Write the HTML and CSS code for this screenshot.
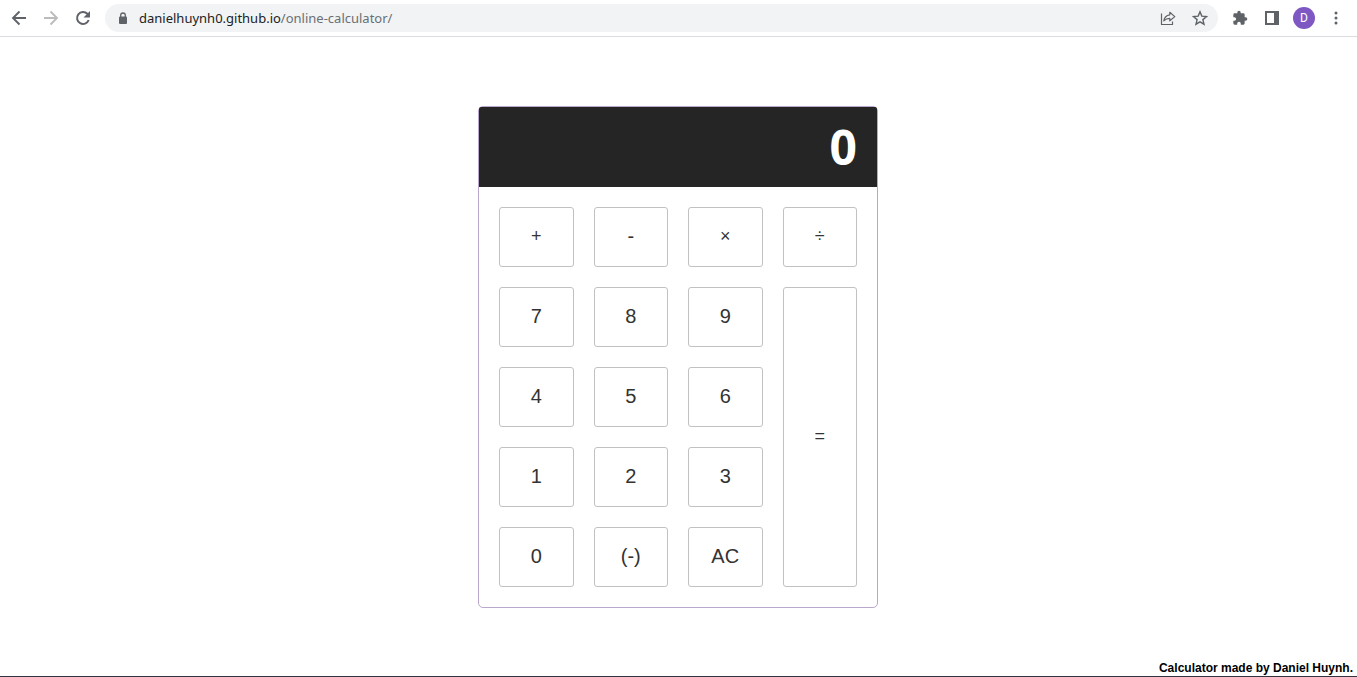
FILE: index.html
```html
<!DOCTYPE html>
<html lang="en">
<head>
<meta charset="utf-8">
<title>Online Calculator</title>
<link rel="stylesheet" href="styles.css">
</head>
<body>
<header class="toolbar">
  <nav class="nav">
    <button class="icon-button" aria-label="Back"><svg viewBox="0 0 16 16"><path d="M15 8H2.500M8.500 1.500L2 8l6.500 6.500" fill="none" stroke="currentColor" stroke-width="1.900"/></svg></button>
    <button class="icon-button faded" aria-label="Forward"><svg viewBox="0 0 16 16"><path d="M1 8h12.500M7.500 1.500L14 8l-6.500 6.500" fill="none" stroke="currentColor" stroke-width="1.900"/></svg></button>
    <button class="icon-button" aria-label="Reload"><svg viewBox="0 0 16 16"><path d="M13.700 10a6 6 0 1 1-1.300-6.200L14 5.400" fill="none" stroke="currentColor" stroke-width="2"/><path d="M15 1v6.500H8.500z" fill="currentColor"/></svg></button>
  </nav>
  <div class="address">
    <svg class="lock" viewBox="0 0 10 13" aria-hidden="true"><rect x="1" y="4.500" width="8" height="7.500" rx="1" fill="currentColor"/><path d="M2.700 5V3.300a2.300 2.300 0 0 1 4.600 0V5" fill="none" stroke="currentColor" stroke-width="1.300"/></svg>
    <a class="url" href="#"><span class="host">danielhuynh0.github.io</span>/online-calculator/</a>
    <button class="icon-button" aria-label="Share"><svg viewBox="0 0 16 16"><path d="M1.500 3.500v11h11v-3M3.800 10.800C4.300 7.500 6.300 5.200 9.800 4.800V2.300l5 4.300-5 4.200V8.300c-2.500 0-4.500.8-6 2.500z" fill="none" stroke="currentColor" stroke-width="1.200" stroke-linejoin="round"/></svg></button>
    <button class="icon-button" aria-label="Bookmark"><svg viewBox="0 0 16 16"><path d="M8 1.800l1.800 4.300 4.700.4-3.600 3.100 1.100 4.600L8 11.800l-4 2.400 1.100-4.600-3.600-3.100 4.700-.4z" fill="none" stroke="currentColor" stroke-width="1.400"/></svg></button>
  </div>
  <div class="actions">
    <button class="icon-button" aria-label="Extensions"><svg viewBox="0 0 24 24"><path d="M20.500 11H19V7a2 2 0 0 0-2-2h-4V3.500a2.500 2.500 0 0 0-5 0V5H4a2 2 0 0 0-2 2v3.800h1.500a2.700 2.700 0 0 1 0 5.400H2V20a2 2 0 0 0 2 2h3.800v-1.500a2.700 2.700 0 0 1 5.400 0V22H17a2 2 0 0 0 2-2v-4h1.500a2.500 2.500 0 0 0 0-5z" fill="currentColor"/></svg></button>
    <button class="icon-button" aria-label="Side panel"><svg viewBox="0 0 16 16"><path d="M1 1h14v14H1zM3 3v10h7V3z" fill="currentColor" fill-rule="evenodd"/></svg></button>
    <button class="avatar" aria-label="Profile">D</button>
    <button class="icon-button" aria-label="Menu"><svg viewBox="0 0 16 16" fill="currentColor"><circle cx="8" cy="3" r="1.500"/><circle cx="8" cy="8" r="1.500"/><circle cx="8" cy="13" r="1.500"/></svg></button>
  </div>
</header>
<main class="stage">
  <section class="calculator" aria-label="Calculator">
    <output class="display">0</output>
    <div class="keys">
      <button class="key operator">+</button>
      <button class="key">-</button>
      <button class="key operator">×</button>
      <button class="key operator">÷</button>
      <button class="key">7</button>
      <button class="key">8</button>
      <button class="key">9</button>
      <button class="key operator equals">=</button>
      <button class="key">4</button>
      <button class="key">5</button>
      <button class="key">6</button>
      <button class="key">1</button>
      <button class="key">2</button>
      <button class="key">3</button>
      <button class="key">0</button>
      <button class="key">(-)</button>
      <button class="key">AC</button>
    </div>
  </section>
</main>
<footer class="credit">Calculator made by Daniel Huynh.</footer>
</body>
</html>
```
FILE: styles.css
```css
* {
  box-sizing: border-box;
}

body {
  display: flex;
  flex-direction: column;
  min-height: 100vh;
  margin: 0;
  background: #fff;
  font-family: "Liberation Sans", Arial, sans-serif;
}

button {
  padding: 0;
  border: 0;
  background: none;
  font: inherit;
  cursor: pointer;
}

.toolbar {
  display: flex;
  align-items: center;
  gap: 14px;
  height: 37px;
  padding: 0 13px 0 11px;
  border-bottom: 1px solid #dadce0;
  color: #5f6368;
}

.nav,
.actions {
  display: flex;
  align-items: center;
  gap: 16px;
}

.icon-button {
  display: block;
  width: 16px;
  height: 16px;
  color: #5f6368;
}

.icon-button svg {
  display: block;
  width: 100%;
  height: 100%;
}

.faded {
  color: #babcbe;
}

.address {
  display: flex;
  flex: 1;
  align-items: center;
  gap: 16px;
  height: 28px;
  padding: 0 10px 0 13px;
  border-radius: 14px;
  background: #f1f3f4;
}

.lock {
  width: 10px;
  height: 13px;
}

.url {
  flex: 1;
  margin-left: -5px;
  color: #6b6f74;
  font: 13px/20px "Noto Sans", "Open Sans", sans-serif;
  text-decoration: none;
}

.host {
  color: #202124;
}

.avatar {
  width: 22px;
  height: 22px;
  margin: 0 -3px;
  border-radius: 50%;
  background: #7e57c2;
  color: #fff;
  font: 12px/22px Roboto, sans-serif;
}

.stage {
  display: flex;
  flex: 1;
  align-items: center;
  justify-content: center;
  padding: 17px 1px 0 0;
}

.calculator {
  width: 400px;
  max-width: 100%;
  border: 1px solid #b9a7cd;
  border-radius: 5px;
}

.display {
  display: block;
  height: 80px;
  padding: 0 20px;
  border-radius: 2px 2px 0 0;
  background: #252525;
  color: #fff;
  font: bold 48px/80px "Open Sans", "Noto Sans", sans-serif;
  text-align: right;
}

.keys {
  display: grid;
  grid-template-columns: repeat(4, 1fr);
  grid-auto-rows: 60px;
  gap: 20px;
  padding: 20px;
}

.key {
  padding-bottom: 2px;
  border: 1px solid #c1c1c1;
  border-radius: 3px;
  color: #333;
  font-size: 20px;
}

.operator {
  font-size: 18px;
}

.equals {
  grid-row: span 4;
}

.credit {
  height: 17px;
  padding-right: 4px;
  border-bottom: 1px solid #35323f;
  color: #000;
  font: bold 12px/16px "Liberation Sans", Arial, sans-serif;
  text-align: right;
}
```
